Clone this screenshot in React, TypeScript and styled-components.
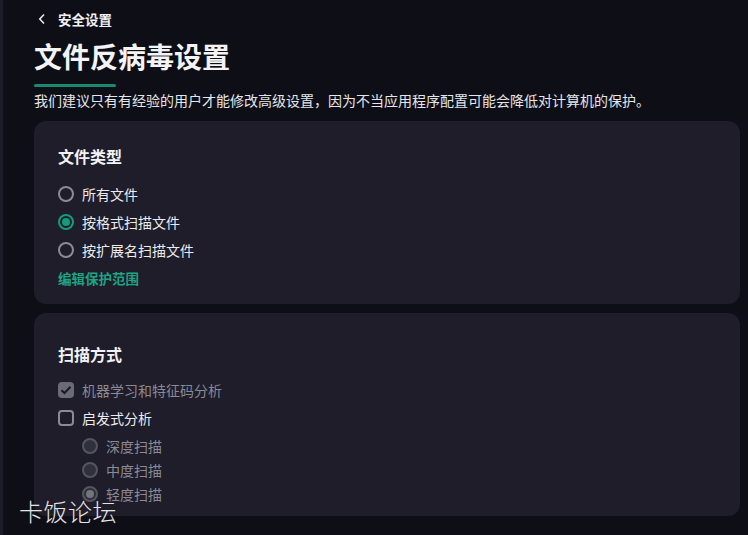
import React from "react";
import styled, { createGlobalStyle } from "styled-components";

const Global = createGlobalStyle`
  html, body { margin: 0; padding: 0; background: #0e0f16; }
  body {
    font-family: "Noto Sans CJK SC", "Noto Sans", sans-serif;
    color: #ececf0;
    width: 748px;
    height: 535px;
    overflow: hidden;
  }
`;

const Shell = styled.div`
  position: relative;
  display: flex;
  width: 748px;
  height: 535px;
  overflow: hidden;
  background: #0e0f16;
`;

const EdgeStrip = styled.div`
  width: 3px;
  flex: none;
  background: #1a1d27;
`;

const Main = styled.main`
  flex: 1;
  padding: 8px 8px 0 31px;
  display: flex;
  flex-direction: column;
`;

const BackRow = styled.div`
  display: flex;
  align-items: center;
  height: 22px;
  gap: 12px;
  padding-left: 4px;
  font-size: 13.5px;
  font-weight: 700;
  color: #f2f2f5;
`;

const Title = styled.h1`
  margin: 8px 0 0;
  font-size: 28px;
  line-height: 36px;
  font-weight: 700;
  color: #f4f4f7;
  letter-spacing: 0;
`;

const Accent = styled.div`
  margin-top: 10px;
  width: 82px;
  height: 3px;
  border-radius: 2px;
  background: #178a70;
`;

const Description = styled.p`
  margin: 3px 0 0;
  font-size: 14px;
  line-height: 20px;
  letter-spacing: 0;
  color: #e6e6ea;
  white-space: nowrap;
`;

const Cards = styled.div`
  margin-top: 11px;
  display: flex;
  flex-direction: column;
  gap: 9px;
`;

const Card = styled.section<{ $top: number; $bottom: number }>`
  background: #1e1d29;
  border-radius: 12px;
  padding: ${(p) => p.$top}px 24px ${(p) => p.$bottom}px;
  display: flex;
  flex-direction: column;
`;

const CardTitle = styled.h2<{ $gap: number }>`
  margin: 0 0 ${(p) => p.$gap}px;
  font-size: 16px;
  line-height: 24px;
  font-weight: 700;
  color: #f2f2f5;
`;

const Row = styled.label<{ $height: number; $indent?: number; $dim?: boolean }>`
  display: flex;
  align-items: center;
  gap: 8px;
  height: ${(p) => p.$height}px;
  padding-left: ${(p) => p.$indent ?? 0}px;
  font-size: 14px;
  color: ${(p) => (p.$dim ? "#8a8995" : "#ececf0")};
`;

const Radio = styled.span<{ $checked?: boolean; $disabled?: boolean }>`
  box-sizing: border-box;
  width: 16px;
  height: 16px;
  flex: none;
  border-radius: 50%;
  border: 2px solid
    ${(p) => (p.$disabled ? "#55555f" : p.$checked ? "#169a7c" : "#8b8a96")};
  background: ${(p) => (p.$disabled ? "#30303c" : "transparent")};
  display: flex;
  align-items: center;
  justify-content: center;
  &::after {
    content: "";
    display: ${(p) => (p.$checked ? "block" : "none")};
    width: 8px;
    height: 8px;
    border-radius: 50%;
    background: ${(p) => (p.$disabled ? "#74737e" : "#169a7c")};
  }
`;

const Checkbox = styled.span<{ $checked?: boolean }>`
  box-sizing: border-box;
  width: 16px;
  height: 16px;
  flex: none;
  border-radius: 4px;
  border: ${(p) => (p.$checked ? "none" : "2px solid #8b8a96")};
  background: ${(p) => (p.$checked ? "#6b6a77" : "transparent")};
  display: flex;
  align-items: center;
  justify-content: center;
`;

const SubGap = styled.div`
  height: 2px;
`;

const Link = styled.a`
  display: flex;
  align-items: center;
  height: 28px;
  font-size: 13.5px;
  font-weight: 700;
  color: #1ea383;
  text-decoration: none;
`;

const Watermark = styled.div`
  position: absolute;
  left: 19px;
  top: 494px;
  font-size: 24px;
  line-height: 34px;
  font-weight: 300;
  color: #e4e4e6;
  letter-spacing: 0.5px;
  pointer-events: none;
`;

const Chevron = () => (
  <svg width="8" height="12" viewBox="0 0 8 12" fill="none">
    <path d="M6 1.5 L1.8 6 L6 10.5" stroke="#e8e8ec" strokeWidth="1.6" />
  </svg>
);

const Check = () => (
  <svg width="12" height="10" viewBox="0 0 12 10" fill="none">
    <path d="M1.5 5.2 L4.5 8 L10.5 1.8" stroke="#1b1a24" strokeWidth="2" />
  </svg>
);

export default function App() {
  return (
    <>
      <Global />
      <Shell>
        <EdgeStrip />
        <Main>
          <BackRow>
            <Chevron />
            <span>安全设置</span>
          </BackRow>
          <Title>文件反病毒设置</Title>
          <Accent />
          <Description>
            我们建议只有有经验的用户才能修改高级设置，因为不当应用程序配置可能会降低对计算机的保护。
          </Description>
          <Cards>
            <Card $top={23} $bottom={12}>
              <CardTitle $gap={12}>文件类型</CardTitle>
              <Row $height={28}>
                <Radio />
                所有文件
              </Row>
              <Row $height={28}>
                <Radio $checked />
                按格式扫描文件
              </Row>
              <Row $height={28}>
                <Radio />
                按扩展名扫描文件
              </Row>
              <Link>编辑保护范围</Link>
            </Card>
            <Card $top={29} $bottom={10}>
              <CardTitle $gap={10}>扫描方式</CardTitle>
              <Row $height={28} $dim>
                <Checkbox $checked>
                  <Check />
                </Checkbox>
                机器学习和特征码分析
              </Row>
              <Row $height={28}>
                <Checkbox />
                启发式分析
              </Row>
              <SubGap />
              <Row $height={24} $indent={24} $dim>
                <Radio $disabled />
                深度扫描
              </Row>
              <Row $height={24} $indent={24} $dim>
                <Radio $disabled />
                中度扫描
              </Row>
              <Row $height={24} $indent={24} $dim>
                <Radio $disabled $checked />
                轻度扫描
              </Row>
            </Card>
          </Cards>
        </Main>
        <Watermark>卡饭论坛</Watermark>
      </Shell>
    </>
  );
}
